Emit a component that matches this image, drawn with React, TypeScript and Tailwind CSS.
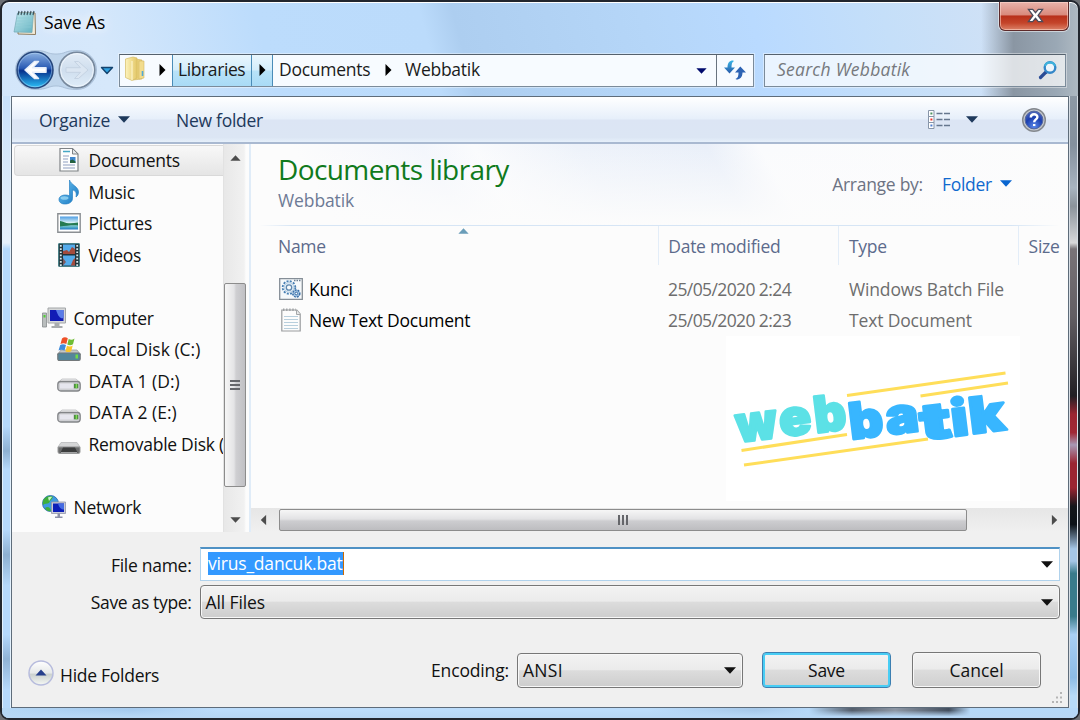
import * as React from "react";

type IconProps = { className?: string };

function NotepadIcon({ className }: IconProps) {
  return (
    <svg viewBox="0 0 24 26" className={className}>
      <defs>
        <linearGradient id="np" x1="0" y1="0" x2="1" y2="1">
          <stop offset="0" stopColor="#c2e8ee" />
          <stop offset="1" stopColor="#62b1c0" />
        </linearGradient>
      </defs>
      <path d="M6 3 L22 3 L22.500 24.500 L5 24 Z" fill="#f4ecd8" stroke="#8d7d60" />
      <path d="M4.500 3 L20.500 3 L19 22.500 L1 22 Z" fill="url(#np)" stroke="#72a9b4" strokeWidth=".7" />
      <path d="M4 8h15M3.700 11h15M3.400 14h15M3 17h15" stroke="#8ccbd5" strokeWidth=".7" />
      <path d="M6 1l-1 4M9 1l-1 4M12 1l-1 4M15 1l-1 4M18 1l-1 4M21 1l-1 4" stroke="#39505a" strokeWidth="1.100" />
    </svg>
  );
}

function NavButtons() {
  return (
    <svg viewBox="0 0 102 42" className="h-[42px] w-[102px] shrink-0">
      <defs>
        <linearGradient id="back" x1="0" y1="0" x2="0" y2="1">
          <stop offset="0" stopColor="#8fb4e4" />
          <stop offset=".45" stopColor="#2a5bb4" />
          <stop offset=".52" stopColor="#06308c" />
          <stop offset="1" stopColor="#2cc3fa" />
        </linearGradient>
        <linearGradient id="fwd" x1="0" y1="0" x2="0" y2="1">
          <stop offset="0" stopColor="#e4edf7" />
          <stop offset=".5" stopColor="#cfdeee" />
          <stop offset="1" stopColor="#dfedf9" />
        </linearGradient>
      </defs>
      <path d="M21 1.500C34 1.500 32 5 42 5S50 1.500 63 1.500A19.500 19.500 0 0 1 63 40.500C50 40.500 50 37 42 37S34 40.500 21 40.500A19.500 19.500 0 0 1 21 1.500Z" fill="#b4cbe4" fillOpacity=".65" stroke="#9db4cd" strokeOpacity=".7" />
      <circle cx="21" cy="21" r="18" fill="url(#back)" stroke="#27477c" strokeWidth="1.500" />
      <circle cx="21" cy="21" r="16.700" fill="none" stroke="#b7d7f4" strokeOpacity=".5" />
      <path d="M11 21L20.500 12.500H24.500L18.500 18.700H32V23.300H18.500L24.500 29.500H20.500Z" fill="#fff" stroke="#e6eefa" strokeWidth="1.500" strokeLinejoin="round" />
      <circle cx="63" cy="21" r="17.800" fill="url(#fwd)" stroke="#77889c" strokeWidth="1.600" />
      <circle cx="63" cy="21" r="16.300" fill="none" stroke="#f3f8fd" strokeOpacity=".8" />
      <path d="M74 21L64.500 12.500H60.500L66.500 18.700H52V23.300H66.500L60.500 29.500H64.500Z" fill="#dbe6f2" stroke="#c5d3e3" />
      <path d="M87.500 18.500H98.500L93 24.500Z" fill="#31a2e2" stroke="#14446f" strokeWidth="1.400" strokeLinejoin="round" />
    </svg>
  );
}

function FolderIcon() {
  return (
    <svg viewBox="0 0 22 26" className="h-[26px] w-[22px]">
      <defs>
        <linearGradient id="fold" x1="0" y1="0" x2="1" y2="0">
          <stop offset="0" stopColor="#fdf3bd" />
          <stop offset="1" stopColor="#e3c767" />
        </linearGradient>
      </defs>
      <path d="M11 3l7 1v19l-9 1z" fill="#e9cf76" stroke="#cfb25a" strokeWidth=".6" />
      <path d="M15 5l5 0v17l-5 1z" fill="#f2dc8d" stroke="#d4b964" strokeWidth=".6" />
      <path d="M1.500 3L9 1l4 1v20l-5 2.500-6.500-3z" fill="url(#fold)" stroke="#d6bc66" strokeWidth=".7" />
      <path d="M8 5v19" stroke="#fff8d4" />
      <path d="M18.500 15v5" stroke="#51aad8" strokeWidth="1.600" />
    </svg>
  );
}

function RefreshIcon() {
  return (
    <svg viewBox="0 0 24 22" className="h-[22px] w-6">
      <defs>
        <linearGradient id="rf" x1="0" y1="0" x2="0" y2="1">
          <stop offset="0" stopColor="#39b6e6" />
          <stop offset="1" stopColor="#2758a8" />
        </linearGradient>
      </defs>
      <path d="M10 1.500C6.500 1.500 4.500 4 4.500 8.500H1L6.500 14.500L12 8.500H8.500C8.500 5 9 3 11 2Z" fill="url(#rf)" />
      <path d="M13.500 20.500C17 20.500 19.500 18 19.500 13.500H23L17.300 7.500L12 13.500H15.500C15.500 17 15 19 12.500 20Z" fill="#2d63b3" />
    </svg>
  );
}

function SearchIcon() {
  return (
    <svg viewBox="0 0 20 20" className="h-5 w-5">
      <path d="M8 12L2.500 17.500" stroke="#2a4c95" strokeWidth="3.200" strokeLinecap="round" />
      <circle cx="12" cy="7.500" r="5.300" fill="#eef5fb" stroke="#3487c8" strokeWidth="2.400" />
      <path d="M7 6A5.300 5.300 0 0 1 17 6" fill="none" stroke="#3eb3dc" strokeWidth="2" />
    </svg>
  );
}

function ViewIcon() {
  return (
    <svg viewBox="0 0 24 20" className="h-5 w-6">
      <g fill="#fff" stroke="#8795a8">
        <path d="M1.500.500h5.500v6h-5.500zM1.500 6.500h5.500v6h-5.500zM1.500 12.500h5.500v6h-5.500z" />
      </g>
      <path d="M9.500 3.500h6M17 3.500h6M9.500 9.500h6M17 9.500h6M9.500 15.500h6M17 15.500h6" stroke="#66778e" strokeWidth="1.600" />
      <path d="M3.400 2.500h2v2h-2z" fill="#4e9461" />
      <path d="M3.400 8.500h2v2h-2z" fill="#ee3329" />
      <path d="M3.400 14.500h2v2h-2z" fill="#4e7dd0" />
    </svg>
  );
}

function HelpIcon() {
  return (
    <svg viewBox="0 0 26 26" className="h-[26px] w-[26px]">
      <defs>
        <radialGradient id="hp" cx=".5" cy=".85" r=".8">
          <stop offset="0" stopColor="#5b88ea" />
          <stop offset=".6" stopColor="#1b3faf" />
          <stop offset="1" stopColor="#4a63b8" />
        </radialGradient>
      </defs>
      <circle cx="13" cy="13" r="11.300" fill="#c3c7cd" stroke="#84888e" strokeWidth="1.500" />
      <circle cx="13" cy="13" r="8.900" fill="url(#hp)" stroke="#53679f" />
      <path d="M9.800 10.400C9.800 6.200 16.400 6.400 16.400 9.900C16.400 12.500 13.200 12.300 13.200 15.200M13.200 16.900V19.100" fill="none" stroke="#fff" strokeWidth="2.400" />
    </svg>
  );
}

function DocumentsIcon() {
  return (
    <svg viewBox="0 0 24 26" className="h-[26px] w-6">
      <path d="M3 1.500h12.500l5.500 5.500v17H3z" fill="#fdfdfd" stroke="#7f8386" strokeWidth="1.200" />
      <path d="M15.500 1.500v5.500h5.500z" fill="#e4e7ea" stroke="#7f8386" />
      <path d="M6 4.500h7" stroke="#46a7c5" strokeWidth="1.400" />
      <path d="M6 9h6M6 12h5M6 15h5M6 18h12M6 21h12" stroke="#8fa0c2" strokeWidth="1.200" />
      <path d="M13 10h5.500v6h-5.500z" fill="#3f87ce" />
      <path d="M13 13.500l2.500-1 3 2v1.500h-5.500z" fill="#25613f" />
    </svg>
  );
}

function MusicIcon() {
  return (
    <svg viewBox="0 0 24 26" className="h-[26px] w-6">
      <defs>
        <linearGradient id="mu" x1="0" y1="0" x2="1" y2="1">
          <stop offset="0" stopColor="#70c6f3" />
          <stop offset="1" stopColor="#1474bf" />
        </linearGradient>
      </defs>
      <path d="M12.500 1C14 6 21.500 7.500 21.500 13C21.500 15.500 20.500 17 19 18C20 13 18 11.500 15.500 11V19.500C15.500 23 12 25 8 25C4 25 2 23 2 20.500C2 17.500 5 16 8.500 16C10 16 11.500 16.300 12.500 17Z" fill="url(#mu)" stroke="#2a82c4" strokeWidth=".7" />
      <ellipse cx="7.500" cy="19" rx="4" ry="1.800" fill="#a6dff8" fillOpacity=".7" />
    </svg>
  );
}

function PicturesIcon() {
  return (
    <svg viewBox="0 0 24 20" className="h-5 w-6">
      <defs>
        <linearGradient id="pic" x1="0" y1="0" x2="0" y2="1">
          <stop offset="0" stopColor="#4d9de3" />
          <stop offset=".5" stopColor="#dff4f5" />
          <stop offset=".8" stopColor="#59b4c6" />
          <stop offset="1" stopColor="#2077c5" />
        </linearGradient>
      </defs>
      <path d="M.8.800h22.400v18.400H.8z" fill="#fff" stroke="#8b8f93" strokeWidth="1.400" />
      <path d="M3 3.500h18v13H3z" fill="url(#pic)" />
      <path d="M3 8c3 .500 6 2.500 9 2.300 3 .3 6-.5 9-.8v3c-6-.5-12 .5-18 1z" fill="#267b52" />
    </svg>
  );
}

function VideosIcon() {
  return (
    <svg viewBox="0 0 22 24" className="h-6 w-[22px]">
      <path d="M.7.700h20.600v22.600H.7z" fill="#24343b" stroke="#317078" />
      <path d="M5 1.500h12v9.500H5zM5 12.500h12v10H5z" fill="#55aceb" />
      <path d="M5 8l4-1 2 2 3-5 3 2v5H5zM13 22l2-5 2-2v7.500h-4z" fill="#a34c3e" />
      <path d="M5 15l3 4-3 3.500z" fill="#7e5b61" />
      <path d="M2.800 2v21M19.200 2v21" stroke="#d6eaf0" strokeWidth="1.800" strokeDasharray="1.700 1.500" />
    </svg>
  );
}

function ComputerIcon() {
  return (
    <svg viewBox="0 0 24 22" className="h-[22px] w-6">
      <path d="M.5 6h4v14h-4z" fill="#b9bdbd" stroke="#878b8d" strokeWidth=".8" />
      <path d="M1.500 8h2v2.500h-2z" fill="#50d135" />
      <path d="M6 1h17.500v15H6z" fill="#d6d8d9" stroke="#a3a6a8" />
      <path d="M8 3h13.500v11H8z" fill="#111bb5" />
      <path d="M14 3h7.500v8c-3 1-5-1-7.500-8z" fill="#5a7ce8" />
      <path d="M12.500 16h5v3h3v2h-11v-2h3z" fill="#a9acae" />
    </svg>
  );
}

function DriveBody({ dark }: { dark?: boolean }) {
  return dark ? (
    <>
      <path d="M4 1.500h16l3 4.500H1z" fill="#d5d6d7" stroke="#b8b9bb" strokeWidth=".8" />
      <path d="M1 6h22v5q0 1.500-2 1.500H3q-2 0-2-1.500z" fill="#6b6c6d" stroke="#98999a" />
      <path d="M6 6.500h12l2.500 5H3.500z" fill="#3c3d3e" />
      <path d="M4 11.500h16" stroke="#a2a3a4" />
    </>
  ) : (
    <>
      <path d="M5 1h14l4 3.500H1z" fill="#ecedee" stroke="#bcbdbf" strokeWidth=".8" />
      <rect x=".8" y="3.500" width="22.400" height="9.500" rx="3" fill="#cfd0d4" stroke="#838588" strokeWidth="1.300" />
      <path d="M3 5.500h13v5H3z" fill="#e6e6ee" />
      <path d="M17 5.800h4.300v4.500H17z" fill="#4e8c43" />
      <path d="M18.700 6h1.400v4.300h-1.400z" fill="#7fdf50" />
    </>
  );
}

function DriveIcon({ dark }: { dark?: boolean }) {
  return (
    <svg viewBox="0 0 24 14" className="mt-[8px] h-[14px] w-6">
      <DriveBody dark={dark} />
    </svg>
  );
}

function SystemDriveIcon() {
  return (
    <svg viewBox="0 0 24 26" className="h-[26px] w-6">
      <path d="M4 14h16l3.500 4.500H.5z" fill="#c3c7c9" stroke="#9a9d9f" strokeWidth=".8" />
      <rect x=".8" y="17" width="22.400" height="7.500" rx="1.500" fill="#54869a" stroke="#73787a" strokeWidth="1.200" />
      <path d="M18.500 18.500h2.500v4h-2.500z" fill="#70da49" />
      <path d="M5 2.500c2-1.700 4-1.300 5.800-.3L9.300 8C7.500 7 5.500 7 3.500 8z" fill="#ee5128" />
      <path d="M11.700 3c2 1 3.800 1 5.800-.5L16 8.300c-2 1.500-4 1.200-5.700.3z" fill="#6fbd35" />
      <path d="M3.200 9c2-1.300 4-1 5.800 0l-1.500 5.500c-2-1-4-1-6 0z" fill="#3f8bdc" />
      <path d="M10 9.700c2 1 3.700 1 5.700-.3l-1.500 5.800c-2 1.300-4 1-5.800 0z" fill="#fbc52c" />
    </svg>
  );
}

function NetworkIcon() {
  return (
    <svg viewBox="0 0 24 24" className="h-6 w-6">
      <circle cx="8.500" cy="8.500" r="8" fill="#3f9be0" stroke="#2864a8" strokeWidth=".8" />
      <path d="M2 4C5 0 9 .5 11 2C10 5 8 5 7 8C5 9 3 8 1 10C.5 7 1 5.500 2 4ZM3 13c3-2 5-1 6 3-3 .5-5-.5-6-3z" fill="#3fae3a" />
      <path d="M6 2.500c2-1 3-1 4-.5l-3 4z" fill="#c8f5cf" />
      <path d="M9.500 7h14v11.500h-14z" fill="#c9cbd8" stroke="#9295aa" strokeWidth=".8" />
      <path d="M11 8.500h11v8.500H11z" fill="#0c1eb8" />
      <path d="M16 8.500h6v6c-3 0-5-2-6-6z" fill="#456be2" />
      <path d="M15.500 18.500h2.500v3h2.500v1.500h-7.500v-1.500h2.500z" fill="#8d91a8" />
    </svg>
  );
}

function BatchIcon() {
  return (
    <svg viewBox="0 0 24 22" className="h-[22px] w-6">
      <path d="M.7.700h22.600v20.600H.7z" fill="#f6f9fb" stroke="#858e97" strokeWidth="1.300" />
      <path d="M15 2.500h7" stroke="#6c7f93" strokeWidth="1.500" strokeDasharray="1.500 1" />
      <circle cx="10" cy="9.500" r="6.300" fill="none" stroke="#477fb3" strokeWidth="1.800" strokeDasharray="2 1.300" />
      <circle cx="10" cy="9.500" r="4.900" fill="#e3eef6" stroke="#a5c2dc" strokeWidth=".8" />
      <circle cx="10" cy="9.500" r="2.700" fill="#f8fbfd" stroke="#5f88af" strokeWidth="1.300" />
      <circle cx="17.300" cy="15.500" r="3.500" fill="#a5c5e2" stroke="#3c70a8" strokeWidth="1.500" strokeDasharray="1.900 1" />
      <circle cx="17.300" cy="15.500" r="1.300" fill="#fff" stroke="#3c70a8" />
    </svg>
  );
}

function TextFileIcon() {
  return (
    <svg viewBox="0 0 20 24" className="h-6 w-5">
      <path d="M.8 2h15l3.400 4v17H.8z" fill="#fcfcfc" stroke="#999c9e" strokeWidth="1.200" />
      <path d="M2 1.800h13" stroke="#9da1a4" strokeWidth="2.500" strokeDasharray="1.400 1.700" />
      <path d="M15.500 2v4.500h4" fill="#e6e7e8" stroke="#a4a7a9" />
      <path d="M3 8.500h14M3 11.500h14M3 14.500h14M3 17.500h14M3 20.500h14" stroke="#b8cfdd" />
    </svg>
  );
}

function Arrow({ className }: IconProps) {
  return (
    <svg viewBox="0 0 12 7" className={className} fill="currentColor">
      <path d="M0 .300H12L6 6.700Z" />
    </svg>
  );
}

function Crumb({ className = "" }: IconProps) {
  return (
    <svg viewBox="0 0 6 12" className={`h-3 w-[7px] shrink-0 ${className}`}>
      <path d="M0 0L6 6L0 12Z" />
    </svg>
  );
}

type SideItem = {
  label: string;
  icon?: React.ReactNode;
  root?: boolean;
  active?: boolean;
  wide?: boolean;
};

const sideItems: SideItem[] = [
  { label: "Documents", icon: <DocumentsIcon />, active: true },
  { label: "Music", icon: <MusicIcon /> },
  { label: "Pictures", icon: <PicturesIcon /> },
  { label: "Videos", icon: <VideosIcon /> },
  { label: "" },
  { label: "Computer", icon: <ComputerIcon />, root: true },
  { label: "Local Disk (C:)", icon: <SystemDriveIcon />, wide: true },
  { label: "DATA 1 (D:)", icon: <DriveIcon />, wide: true },
  { label: "DATA 2 (E:)", icon: <DriveIcon />, wide: true },
  { label: "Removable Disk (", icon: <DriveIcon dark /> },
  { label: "" },
  { label: "Network", icon: <NetworkIcon />, root: true },
];

const files = [
  { name: "Kunci", date: "25/05/2020 2:24", type: "Windows Batch File", icon: <BatchIcon /> },
  { name: "New Text Document", date: "25/05/2020 2:23", type: "Text Document", icon: <TextFileIcon /> },
];

function TitleBar() {
  return (
    <div className="flex h-[47px] items-start pl-[11px] pr-[9px]">
      <NotepadIcon className="mt-[8px] h-[26px] w-6" />
      <span className="ml-[7px] mt-[8px] tracking-[-0.1px] text-black [text-shadow:0_0_8px_#fff,0_0_14px_#fff]">Save As</span>
      <button className="ml-auto flex h-[29px] w-[70px] items-center justify-center rounded-b-[6px] border border-t-0 border-[#5d2a2a] bg-[linear-gradient(#e9b3ab_0%,#d98a7c_46%,#b8301a_50%,#c4452a_75%,#dc8268_100%)] shadow-[inset_0_0_0_1px_rgba(255,220,210,.55),0_0_0_1px_rgba(255,255,255,.5)]">
        <svg viewBox="0 0 18 16" className="mb-[2px] ml-[2px] h-[15px] w-[17px]">
          <path d="M1.500 1.500H6L9 5L12 1.500H16.500L11.700 8L16.500 14.500H12L9 11L6 14.500H1.500L6.300 8Z" fill="#fff" stroke="#4c4d5c" strokeWidth="1.400" />
        </svg>
      </button>
    </div>
  );
}

function AddressBar() {
  return (
    <div className="flex h-[42px] items-center pl-[12px] pr-[12px]">
      <NavButtons />
      <div className="ml-[3px] flex h-[33px] w-[635px] items-center border border-[#7b8b9a] border-t-[#55616d] bg-[#f7fbff] text-[#1b1b1b] shadow-[0_0_0_1px_rgba(255,255,255,.4)]">
        <div className="mb-[2px] ml-1 w-[22px]"><FolderIcon /></div>
        <Crumb className="ml-[13px]" />
        <div className="ml-[6px] flex h-full w-[80px] items-center border-x border-[#4a8cb8] bg-[linear-gradient(#e9f6fd_0%,#d4edfb_48%,#b8e2f8_52%,#a9dbf6_100%)] pl-[5px]">
          <span className="mb-[2px] tracking-[-0.4px]">Libraries</span>
        </div>
        <div className="flex h-full w-[21px] items-center justify-center border-r border-[#4a8cb8] bg-[linear-gradient(#e9f6fd_0%,#d4edfb_48%,#b8e2f8_52%,#a9dbf6_100%)]">
          <Crumb />
        </div>
        <span className="mb-[2px] ml-[6px] w-[92px]">Documents</span>
        <Crumb className="ml-[14px]" />
        <span className="mb-[2px] ml-[13px]">Webbatik</span>
        <Arrow className="ml-auto mr-[9px] mt-[2px] h-[6px] w-[11px] text-[#000a6c]" />
        <div className="flex h-full w-[37px] items-center justify-center border-l border-[#68737f]">
          <RefreshIcon />
        </div>
      </div>
      <div className="ml-[10px] flex h-[33px] flex-1 items-center justify-between border border-[#7b8b9a] border-t-[#55616d] bg-white/70 pl-3 pr-[7px] shadow-[0_0_0_1px_rgba(255,255,255,.4)]">
        <span className="mb-[2px] italic tracking-[0.25px] text-[#76797d]">Search Webbatik</span>
        <SearchIcon />
      </div>
    </div>
  );
}

function Toolbar() {
  return (
    <div className="flex h-[47px] shrink-0 items-center border-b-2 border-[#a9b9d1] bg-[linear-gradient(#ffffff_0%,#e6effa_49%,#dce5f4_51%,#dce6f4_90%,#e6f0fb_100%)] text-[#1e395b]">
      <span className="ml-[27px] w-[72px]">Organize</span>
      <Arrow className="ml-[7px] h-[7px] w-3" />
      <span className="ml-[46px]">New folder</span>
      <div className="ml-auto mr-[15px]"><ViewIcon /></div>
      <Arrow className="mr-[43px] h-[7px] w-3" />
      <div className="mr-[21px] h-[26px]"><HelpIcon /></div>
    </div>
  );
}

function Sidebar() {
  return (
    <div className="w-[211px] shrink-0 overflow-hidden bg-[#fcfcfc] pt-[0.5px]">
      {sideItems.map((item, i) => (
        <div
          key={i}
          className={`flex h-[31.5px] items-center overflow-hidden whitespace-nowrap ${
            item.active
              ? "ml-[2px] rounded-l-[4px] border border-r-0 border-[#d9d9d9] bg-[linear-gradient(#f8f8f8,#e5e5e5)] pl-[42px]"
              : item.root
                ? "pl-[30px]"
                : "pl-[45px]"
          }`}
        >
          {item.icon && <div className="flex w-6 shrink-0 justify-center">{item.icon}</div>}
          <span className={item.wide ? "ml-[7.5px] tracking-normal" : "ml-[7.5px]"}>{item.label}</span>
        </div>
      ))}
    </div>
  );
}

function VerticalScrollbar() {
  return (
    <div className="flex w-[26px] shrink-0 flex-col items-center border-l border-[#e2e2e2] bg-[linear-gradient(90deg,#e8e8e8,#f1f1f1_80%,#fcfcfc_88%)]">
      <Arrow className="mr-[2px] mt-[11px] h-[6px] w-[11px] rotate-180 text-[#4c4c4c]" />
      <div className="mr-[3px] mt-[122px] flex h-[204px] w-[22px] flex-col items-center justify-center gap-[2px] rounded-[2px] border border-[#8c8c8c] bg-[linear-gradient(90deg,#f6f6f6_0%,#e4e4e6_45%,#cfcfd2_55%,#c0c0c4_100%)]">
        <i className="h-[2px] w-[10px] bg-[#65666a]" />
        <i className="h-[2px] w-[10px] bg-[#65666a]" />
        <i className="h-[2px] w-[10px] bg-[#65666a]" />
      </div>
      <Arrow className="mr-[2px] mt-[30px] h-[6px] w-[11px] text-[#4c4c4c]" />
    </div>
  );
}

const webLetters = [
  { c: "w", x: 739, y: 442.5, w: 41, fill: "#5ce1e6" },
  { c: "e", x: 782, y: 437, w: 32, fill: "#5ce1e6" },
  { c: "b", x: 817, y: 433, w: 32, fill: "#5ce1e6" },
  { c: "b", x: 852, y: 439.5, w: 34, fill: "#38b6ff" },
  { c: "a", x: 888.5, y: 435, w: 33, fill: "#38b6ff" },
  { c: "t", x: 923, y: 440.5, w: 31, fill: "#38b6ff" },
  { c: "i", x: 954, y: 436.5, w: 17, fill: "#38b6ff" },
  { c: "k", x: 972, y: 434, w: 36, fill: "#38b6ff" },
];

function Logo() {
  return (
    <svg viewBox="727 336 294 165" className="ml-[475px] h-[165px] w-[294px] shrink-0 bg-white">
      <path d="M848 395.500L1006.500 373M921.500 396L1009 383M742.500 450.500L848 434.500M745 465L929 439" stroke="#ffde59" strokeWidth="3" />
      {webLetters.map((l, i) => (
        <text
          key={i}
          transform={`translate(${l.x} ${l.y}) rotate(-7)`}
          textLength={l.w}
          lengthAdjust="spacingAndGlyphs"
          className="font-['Inter'] text-[50px] font-black tracking-normal"
          fill={l.fill}
          stroke={l.fill}
          strokeWidth="2.500"
          strokeLinejoin="round"
        >
          {l.c}
        </text>
      ))}
    </svg>
  );
}

function FilePane() {
  return (
    <div className="flex min-w-0 flex-1 flex-col overflow-hidden border-l-2 border-[#e0ecf8] bg-[#fcfcfc]">
      <div className="flex h-[81px] shrink-0 items-start justify-between bg-[linear-gradient(to_bottom,transparent,#fcfcfc),linear-gradient(60deg,#fcfcfc_10%,#f3f6fc_25%,#fafbfd_31%,#edf2fa_43%,#e9eff9_58%,#fafbfd_64%,#fcfcfc_100%)] pl-[27px] pr-[56px]">
        <div>
          <h1 className="mt-[8px] text-[28px] leading-[34px] tracking-[-0.6px] text-[#107a1c]">Documents library</h1>
          <p className="mt-[2px] leading-6 tracking-[-0.1px] text-[#6d7a95]">Webbatik</p>
        </div>
        <div className="mt-[28px] flex items-center">
          <span className="text-[#6d7383]">Arrange by:</span>
          <span className="ml-[19px] text-[#1169ce]">Folder</span>
          <Arrow className="mb-[2px] ml-2 h-[7px] w-3 text-[#0a66d0]" />
        </div>
      </div>
      <div className="h-px shrink-0 bg-[linear-gradient(90deg,#fcfcfc_1%,#d6e5f5_5%,#d6e5f5_93%,#fcfcfc_99%)]" />
      <div className="relative flex h-[39px] shrink-0 whitespace-nowrap leading-[40px] text-[#5c6b8c]">
        <div className="w-[408px] pl-[27px]">Name</div>
        <div className="w-[180.5px] border-l border-[#e3edf8] pl-[9px]">Date modified</div>
        <div className="w-[180px] border-l border-[#e3edf8] pl-[9.5px]">Type</div>
        <div className="w-[50px] border-l border-[#e3edf8] pl-[9.5px]">Size</div>
        <Arrow className="absolute left-[207px] top-[2px] h-[6px] w-[11px] rotate-180 text-[#6a9db9]" />
      </div>
      <div className="h-[71px] shrink-0 pt-[8px]">
        {files.map((file) => (
          <div key={file.name} className="flex h-[31.5px] items-center text-[#6d6d6d]">
            <div className="ml-[27px] flex w-[26px] justify-center">{file.icon}</div>
            <span className="ml-[5px] w-[359px] text-black">{file.name}</span>
            <span className="w-[181px] tracking-[-0.6px]">{file.date}</span>
            <span className="tracking-[-0.15px]">{file.type}</span>
          </div>
        ))}
      </div>
      <Logo />
      <div className="mt-[7px] flex h-[24px] shrink-0 items-center bg-[linear-gradient(#e6e6e6,#f0f0f0)]">
        <Arrow className="ml-[7px] h-[6px] w-[11px] rotate-90 text-[#4c4c4c]" />
        <div className="ml-[10px] flex h-[22px] w-[688px] items-center justify-center gap-[2px] rounded-[2px] border border-[#8c8c8c] bg-[linear-gradient(#f6f6f6_0%,#e2e2e4_45%,#cdcdd0_55%,#bdbdc0_100%)]">
          <i className="h-[10px] w-[2px] bg-[#65666a]" />
          <i className="h-[10px] w-[2px] bg-[#65666a]" />
          <i className="h-[10px] w-[2px] bg-[#65666a]" />
        </div>
        <Arrow className="ml-auto mr-[8px] h-[6px] w-[11px] -rotate-90 text-[#4c4c4c]" />
      </div>
    </div>
  );
}

function Footer() {
  return (
    <div className="relative flex-1 bg-[#f0f0f0]">
      <div className="mt-[15px] flex h-[34px] items-center pr-[8px]">
        <span className="mt-px w-[179.5px] text-right">File name:</span>
        <div className="ml-2 flex h-[34px] flex-1 items-center border border-[#b0d2ec] border-t-2 border-t-[#4f91c4] bg-white pl-[7.5px] pr-[6px]">
          <span className="mb-[3px] h-[23px] border-r border-[#cc6a00] bg-[#3399ff] leading-[23px] tracking-[-0.2px] text-white">virus_dancuk.bat</span>
          <Arrow className="ml-auto h-[7px] w-3" />
        </div>
      </div>
      <div className="mt-1 flex h-[34px] items-center pr-[8px]">
        <span className="w-[179.5px] text-right tracking-[-0.35px]">Save as type:</span>
        <div className="ml-2 flex h-[34px] flex-1 items-center rounded-[4px] border border-[#777] bg-[linear-gradient(#f3f3f3_0%,#ebebeb_47%,#dcdcdc_51%,#cdcdcd_100%)] pl-[5px] pr-[6px] shadow-[inset_0_0_0_1px_#f8f8f8]">
          <span className="tracking-[-0.1px]">All Files</span>
          <Arrow className="ml-auto h-[7px] w-3" />
        </div>
      </div>
      <div className="mt-[33px] flex h-9 items-start">
        <svg viewBox="0 0 26 26" className="ml-4 mt-[8px] h-[26px] w-[26px]">
          <defs>
            <linearGradient id="hf" x1="0" y1="0" x2="0" y2="1">
              <stop offset="0" stopColor="#fff" />
              <stop offset=".5" stopColor="#e6e9e9" />
              <stop offset=".55" stopColor="#cbd1ce" />
              <stop offset="1" stopColor="#f5f8f5" />
            </linearGradient>
          </defs>
          <circle cx="13" cy="13" r="12" fill="url(#hf)" stroke="#b7bcdd" strokeWidth="1.500" />
          <path d="M7.500 15.500L13 9.500L18.500 15.500Z" fill="#27408c" />
        </svg>
        <span className="ml-[6px] mt-[11px]">Hide Folders</span>
        <div className="ml-auto flex h-[36px] items-center">
          <span className="tracking-[-0.15px]">Encoding:</span>
          <div className="ml-[8px] flex h-[35px] w-[226px] items-center rounded-[4px] border border-[#777] bg-[linear-gradient(#f3f3f3_0%,#ebebeb_47%,#dcdcdc_51%,#cdcdcd_100%)] pl-[5px] pr-[6px] shadow-[inset_0_0_0_1px_#f8f8f8]">
            <span className="tracking-[0.3px]">ANSI</span>
            <Arrow className="ml-auto h-[7px] w-3" />
          </div>
          <button className="ml-[19px] h-[36px] w-[129px] rounded-[4px] border border-[#3c7fb1] bg-[linear-gradient(#f3f3f3_0%,#ebebeb_47%,#dcdcdc_51%,#cfcfcf_100%)] shadow-[inset_0_0_0_2px_#48cdf4]">Save</button>
          <button className="ml-[21px] mr-[27px] h-[36px] w-[129px] rounded-[4px] border border-[#777] bg-[linear-gradient(#f3f3f3_0%,#ebebeb_47%,#dcdcdc_51%,#cfcfcf_100%)] tracking-[0px] shadow-[inset_0_0_0_1px_#f8f8f8]">Cancel</button>
        </div>
      </div>
      <svg viewBox="0 0 12 12" className="absolute bottom-[3px] right-[5px] h-3 w-3" fill="#b5b5b5">
        <path d="M9 0h2v2h-2zM5 4.500h2v2h-2zM9 4.500h2v2h-2zM1 9h2v2h-2zM5 9h2v2h-2zM9 9h2v2h-2z" />
      </svg>
    </div>
  );
}

export default function App() {
  return (
    <div className="h-[720px] w-[1080px] overflow-hidden bg-[#6d7075] font-['Open_Sans','Noto_Sans',sans-serif] text-[17.5px] leading-6 tracking-[-0.27px] text-[#111]">
      <div className="flex h-full flex-col overflow-hidden rounded-[9px] border-2 border-[#22262e] bg-[#b5d7f8] bg-[linear-gradient(90deg,transparent_91%,#8a96a3_94%,#9aa8b5_98%,#aeb9c2_100%),linear-gradient(75deg,#d3e6fa_0%,#d6e8fb_10%,#bcdcfc_25%,#bbdbfb_40%,#adcef0_43%,#b5d6f8_60%,#b9daff_70%,#c5dff9_82%,#cfe1f6_92%)] bg-[length:100%_95px] bg-no-repeat shadow-[inset_0_1px_0_#fff]">
        <TitleBar />
        <AddressBar />
        <div className="mt-[5px] flex h-[612px] shrink-0">
          {/* glass edges show the desktop behind the window */}
          <div className="w-[9px] shrink-0 border-x border-[#e3f1fd] bg-[linear-gradient(#c9e1fa_0%,#e6f0fb_24%,#b5d8fb_25%,#b5d8fb_54%,#8eb1d3_58%,#b5d8fb_61%,#b5d8fb_71%,#8db0d2_75%,#b5d8fb_80%,#b5d8fb_88%,#90b3d5_92%,#b5d8fb_97%)]" />
          <div className="flex w-[1058px] shrink-0 flex-col border border-[#5e6c7a]">
            <Toolbar />
            <div className="flex h-[388px] shrink-0">
              <Sidebar />
              <VerticalScrollbar />
              <FilePane />
            </div>
            <Footer />
          </div>
          <div className="flex-1 border-x border-[#d8dfe6] bg-[linear-gradient(#8d99a5_0%,#84909d_8%,#a8b4c0_15%,#8b939b_18%,#d8d8da_24%,#797378_25%,#625e63_36%,#211f24_49%,#9b2532_52%,#a12835_55%,#a798b5_57%,#9b2532_60%,#9b2532_64%,#15171b_67%,#0c1218_70%,#a5c6e7_74%,#a5c6e7_76%,#397b8b_78%,#397b8b_85%,#a9cff4_88%,#8dbbe5_95%,#b7daf8_98%)]" />
        </div>
        <div className="h-[10px] shrink-0 bg-[linear-gradient(transparent_25%,#b7d7f5_85%),linear-gradient(90deg,#b5d7f5_0%,#a6cbef_12%,#bbdcfb_20%,#bbdcfb_60%,#a7c9ea_70%,#b5d8f8_75%,#555f6d_79%,#8d97a5_83%,#434f5f_88%,#b5d8f8_90%)]" />
      </div>
    </div>
  );
}
